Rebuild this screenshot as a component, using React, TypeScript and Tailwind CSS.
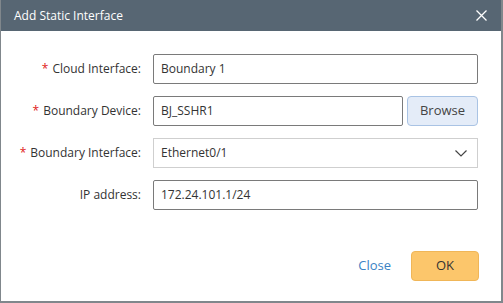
import React from 'react';

const font = { fontFamily: '"Open Sans", "Noto Sans", sans-serif' };

const Label: React.FC<{ text: string; required?: boolean }> = ({ text, required }) => (
  <div className="w-[140px] shrink-0 text-right text-[12px] text-[#333]">
    {required && <span className="text-[#e02020] mr-1">*</span>}
    {text}
  </div>
);

export default function App() {
  return (
    <div className="w-[503px] h-[303px] bg-[#80878c] pl-px" style={font}>
      <div className="w-[500px] h-[301px] bg-white flex flex-col">
        <div className="h-[31px] bg-[#576673] flex items-center justify-between pl-[13px] pr-[12px]">
          <span className="text-white text-[12px]">Add Static Interface</span>
          <svg width="11" height="11" viewBox="0 0 11 11" className="mr-[2px]">
            <path d="M0.5 0.5 L10.5 10.5 M10.5 0.5 L0.5 10.5" stroke="white" strokeWidth="1.3" />
          </svg>
        </div>

        <div className="flex flex-col gap-[12px] pt-[23px] pr-[23px]">
          <div className="flex items-center gap-[12px]">
            <Label text="Cloud Interface:" required />
            <div className="flex-1 h-[30px] border border-[#7a7a7a] rounded-[2px] flex items-center pl-[7px] text-[12px] text-[#333]">
              Boundary 1
            </div>
          </div>

          <div className="flex items-center gap-[12px]">
            <Label text="Boundary Device:" required />
            <div className="flex-1 flex gap-[4px]">
              <div className="flex-1 h-[30px] border border-[#7a7a7a] rounded-[2px] flex items-center pl-[7px] text-[12px] text-[#333]">
                BJ_SSHR1
              </div>
              <button className="w-[71px] h-[30px] bg-[#e4ecf8] border border-[#a9c3e4] rounded-[4px] text-[13px] text-[#444]">
                Browse
              </button>
            </div>
          </div>

          <div className="flex items-center gap-[12px]">
            <Label text="Boundary Interface:" required />
            <div className="flex-1 h-[30px] border border-[#cfcfcf] flex items-center justify-between pl-[7px] pr-[10px] text-[12px] text-[#333]">
              <span>Ethernet0/1</span>
              <svg width="12" height="7" viewBox="0 0 12 7">
                <path d="M0.5 0.5 L6 6 L11.5 0.5" fill="none" stroke="#444" strokeWidth="1.2" />
              </svg>
            </div>
          </div>

          <div className="flex items-center gap-[12px]">
            <Label text="IP address:" />
            <div className="flex-1 h-[30px] border border-[#7a7a7a] rounded-[2px] flex items-center pl-[7px] text-[12px] text-[#333]">
              172.24.101.1/24
            </div>
          </div>
        </div>

        <div className="mt-auto mb-[20px] flex items-center justify-end gap-[20px] pr-[22px]">
          <span className="text-[13px] text-[#3b82c4]">Close</span>
          <button className="w-[68px] h-[30px] bg-[#fcc66b] border border-[#f0b658] rounded-[4px] text-[13px] text-[#333]">
            OK
          </button>
        </div>
      </div>
    </div>
  );
}
